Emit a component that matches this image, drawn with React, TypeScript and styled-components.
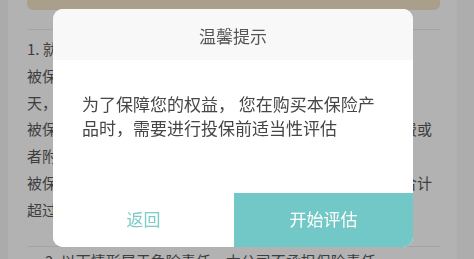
import React from "react";
import styled, { createGlobalStyle } from "styled-components";

const Global = createGlobalStyle`
  html, body { margin: 0; padding: 0; }
  body {
    width: 474px;
    height: 259px;
    overflow: hidden;
    background: #f5f5f5;
    font-family: "Noto Sans CJK SC", "Noto Sans", sans-serif;
  }
`;

const Page = styled.div`
  display: grid;
  grid-template-columns: 8px 449px 17px;
  height: 259px;
  overflow: hidden;
`;

const Side = styled.div<{ $tone: string }>`
  background: ${(p) => p.$tone};
`;

const Content = styled.div`
  background: #ffffff;
  padding: 0 17px 0 19px;
  display: flex;
  flex-direction: column;
`;

const Banner = styled.div`
  height: 10px;
  background: #f4e4c8;
  border-radius: 0 0 6px 6px;
  flex-shrink: 0;
`;

const Rule = styled.div<{ $top: number }>`
  margin-top: ${(p) => p.$top}px;
  height: 1px;
  background: #ebebeb;
  flex-shrink: 0;
`;

const Para = styled.div`
  margin-top: 6px;
  font-size: 15px;
  line-height: 26.8px;
  color: #5a5a5a;
  white-space: nowrap;
`;

const NextPara = styled.div`
  margin-top: 1px;
  padding-left: 18px;
  font-size: 15px;
  line-height: 26.7px;
  color: #5a5a5a;
  white-space: nowrap;
`;

const Overlay = styled.div`
  position: fixed;
  inset: 0;
  background: rgba(0, 0, 0, 0.3);
  display: flex;
  align-items: center;
  justify-content: center;
  padding: 0 8px 3px 0;
`;

const Dialog = styled.div`
  width: 360px;
  height: 238px;
  border-radius: 10px;
  overflow: hidden;
  background: #ffffff;
  display: flex;
  flex-direction: column;
`;

const Header = styled.div`
  height: 51px;
  background: #f8f8f8;
  display: flex;
  align-items: center;
  justify-content: center;
  font-size: 17px;
  color: #555555;
  padding-top: 1px;
  box-sizing: border-box;
`;

const Body = styled.div`
  flex: 1;
  display: flex;
  align-items: center;
  padding: 0 28px 22px 29px;
  font-size: 17px;
  line-height: 24px;
  color: #464646;
`;

const Actions = styled.div`
  height: 54px;
  display: grid;
  grid-template-columns: 181px 1fr;
`;

const Action = styled.button<{ $primary?: boolean }>`
  border: none;
  margin: 0;
  padding: 0 0 3px;
  font-family: inherit;
  font-size: 17px;
  background: ${(p) => (p.$primary ? "#72c8c6" : "#ffffff")};
  color: ${(p) => (p.$primary ? "#ffffff" : "#7ccbc6")};
  display: flex;
  align-items: center;
  justify-content: center;
`;

export default function App() {
  return (
    <>
      <Global />
      <Page>
        <Side $tone="#f5f5f5" />
        <Content>
          <Banner />
          <Rule $top={19} />
          <Para>
            <div>1. 就诊医院：须在中华人民共和国境内二级以上</div>
            <div>被保险人须在本公司指定或认可的医院就诊，等待期为15</div>
            <div>天，等待期内发生的保险事故不承担保险责任。</div>
            <div>被保险人因意外伤害或疾病在医院接受治疗所产生的医疗费或</div>
            <div>者附加费用，由本公司按约定给付。</div>
            <div>被保险人在保险期间内多次就诊的，本公司累计给付金额合计</div>
            <div>超过保险金额时，本公司不再承担给付责任。</div>
          </Para>
          <Rule $top={22} />
          <NextPara>2. 以下情形属于免除责任，本公司不承担保险责任</NextPara>
        </Content>
        <Side $tone="#f8f8f8" />
      </Page>
      <Overlay>
        <Dialog>
          <Header>温馨提示</Header>
          <Body>为了保障您的权益， 您在购买本保险产品时，需要进行投保前适当性评估</Body>
          <Actions>
            <Action>返回</Action>
            <Action $primary>开始评估</Action>
          </Actions>
        </Dialog>
      </Overlay>
    </>
  );
}
